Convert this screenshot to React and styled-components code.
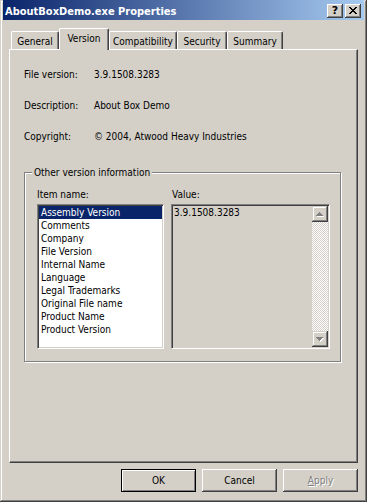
import React from 'react';
import styled, { createGlobalStyle } from 'styled-components';

const FONT = `"DejaVu Sans Condensed", "DejaVu Sans", sans-serif`;

const Global = createGlobalStyle`
  html, body { margin: 0; padding: 0; background: #D4D0C8; }
  body { font-family: ${FONT}; font-size: 10px; color: #000; }
  * { box-sizing: border-box; }
`;

const Window = styled.div`
  width: 367px;
  height: 502px;
  display: flex;
  flex-direction: column;
  padding: 0 3px 3px 3px;
  background: #D4D0C8;
  box-shadow: inset -1px -1px #404040, inset 1px 1px #D4D0C8, inset -2px -2px #808080, inset 2px 2px #ffffff;
`;

const TitleBar = styled.div`
  flex: none;
  height: 20px;
  display: flex;
  align-items: center;
  padding: 2px 3px 0 2px;
  background: linear-gradient(to right, #0A246A, #A6CAF0);
  color: #fff;
  font-weight: bold;
  font-size: 11px;
`;

const Title = styled.div`
  flex: 1;
  white-space: nowrap;
  line-height: 13px;
`;

const CaptionButtons = styled.div`
  display: flex;
  gap: 2px;
`;

const CaptionButton = styled.div`
  width: 16px;
  height: 14px;
  background: #D4D0C8;
  box-shadow: inset -1px -1px #404040, inset 1px 1px #ffffff, inset -2px -2px #808080;
  display: flex;
  align-items: center;
  justify-content: center;
  color: #000;
  font-family: "DejaVu Sans", sans-serif;
  font-weight: bold;
  font-size: 11px;
  line-height: 11px;
  padding-bottom: 1px;
`;

const Body = styled.div`
  flex: 1;
  display: flex;
  flex-direction: column;
  padding: 8px 6px 7px 6px;
`;

const TabStrip = styled.div`
  display: flex;
  align-items: flex-end;
  height: 21px;
  padding-left: 2px;
`;

const Tab = styled.div`
  width: ${p => p.$w}px;
  height: ${p => (p.$active ? 22 : 18)}px;
  margin-bottom: ${p => (p.$active ? -1 : 0)}px;
  position: relative;
  z-index: ${p => (p.$active ? 1 : 0)};
  background: #D4D0C8;
  border-top: 1px solid #fff;
  border-left: 1px solid #fff;
  border-right: 1px solid #404040;
  border-radius: 2px 2px 0 0;
  box-shadow: inset -1px 0 #808080;
  display: flex;
  justify-content: center;
  padding-top: 3px;
  line-height: 13px;
  white-space: nowrap;
`;

const Panel = styled.div`
  flex: 1;
  display: flex;
  flex-direction: column;
  border-top: 1px solid #fff;
  border-left: 1px solid #fff;
  border-right: 1px solid #404040;
  border-bottom: 1px solid #404040;
  box-shadow: inset -1px -1px #808080;
  padding: 18px 16px 0 14px;
`;

const InfoGrid = styled.div`
  display: grid;
  grid-template-columns: 70px 1fr;
  row-gap: 18px;
  line-height: 13px;
  white-space: nowrap;
`;

const GroupBox = styled.fieldset`
  margin: 23px 0 0 0;
  padding: 9px 10px 12px 12px;
  border: 1px solid #808080;
  box-shadow: inset 1px 1px #fff, 1px 1px #fff;
  min-width: 0;
`;

const Legend = styled.legend`
  padding: 0 2px;
  margin-left: -5px;
  line-height: 13px;
  background: #D4D0C8;
`;

const Columns = styled.div`
  display: grid;
  grid-template-columns: 127px 159px;
  grid-template-rows: 13px 145px;
  column-gap: 7px;
  row-gap: 3px;
  line-height: 13px;
`;

const FieldLabel = styled.div`
  padding-left: ${p => p.$indent || 0}px;
  white-space: nowrap;
`;

const Sunken = styled.div`
  border: 1px solid;
  border-color: #808080 #fff #fff #808080;
  box-shadow: inset 1px 1px #404040, inset -1px -1px #D4D0C8;
  padding: 1px;
`;

const ListBox = styled(Sunken)`
  background: #fff;
  overflow: hidden;
`;

const ListItem = styled.div`
  height: 13px;
  line-height: 13px;
  padding-left: 2px;
  white-space: nowrap;
  background: ${p => (p.$selected ? '#0A246A' : 'transparent')};
  color: ${p => (p.$selected ? '#fff' : '#000')};
`;

const ValueBox = styled(Sunken)`
  background: #D4D0C8;
  display: flex;
`;

const ValueText = styled.div`
  flex: 1;
  padding: 0 0 0 1px;
  white-space: nowrap;
`;

const ScrollBar = styled.div`
  width: 16px;
  display: flex;
  flex-direction: column;
`;

const ScrollButton = styled.div`
  height: 16px;
  flex: none;
  background: #D4D0C8;
  box-shadow: inset -1px -1px #404040, inset 1px 1px #D4D0C8, inset -2px -2px #808080, inset 2px 2px #ffffff;
  display: flex;
  align-items: center;
  justify-content: center;
`;

const ScrollTrack = styled.div`
  flex: 1;
  background-color: #D4D0C8;
  background-image: conic-gradient(#fff 25%, transparent 0 50%, #fff 0 75%, transparent 0);
  background-size: 2px 2px;
`;

const ButtonRow = styled.div`
  display: flex;
  justify-content: flex-end;
  gap: 6px;
  margin-top: 6px;
`;

const Button = styled.button`
  width: 75px;
  height: 23px;
  padding: 0;
  margin: 0;
  font-family: ${FONT};
  font-size: 10px;
  background: #D4D0C8;
  color: ${p => (p.$disabled ? '#808080' : '#000')};
  text-shadow: ${p => (p.$disabled ? '1px 1px #fff' : 'none')};
  border: ${p => (p.$default ? '1px solid #000' : 'none')};
  box-shadow: ${p =>
    p.$default
      ? 'inset 1px 1px #fff, inset -1px -1px #808080'
      : 'inset -1px -1px #404040, inset 1px 1px #fff, inset -2px -2px #808080'};
  outline: none;
  appearance: none;
`;

const Arrow = ({ down }) => {
  const rows = [1, 3, 5, 7];
  const rects = (dx, dy, fill) =>
    rows.map((w, i) => {
      const y = down ? 3 - i : i;
      return <rect key={fill + i} x={(7 - w) / 2 + dx} y={y + dy} width={w} height={1} fill={fill} />;
    });
  return (
    <svg width="8" height="5" viewBox="0 0 8 5" shapeRendering="crispEdges">
      {rects(1, 1, '#fff')}
      {rects(0, 0, '#808080')}
    </svg>
  );
};

const CloseGlyph = () => {
  const rows = [
    [0, 1, 6, 7],
    [1, 2, 5, 6],
    [2, 3, 4, 5],
    [3, 4],
    [2, 3, 4, 5],
    [1, 2, 5, 6],
    [0, 1, 6, 7],
  ];
  return (
    <svg width="8" height="7" viewBox="0 0 8 7" shapeRendering="crispEdges">
      {rows.flatMap((xs, y) => xs.map(x => <rect key={`${x}-${y}`} x={x} y={y} width="1" height="1" fill="#000" />))}
    </svg>
  );
};

const tabs = [
  { label: 'General', w: 48 },
  { label: 'Version', w: 50, active: true },
  { label: 'Compatibility', w: 68 },
  { label: 'Security', w: 50 },
  { label: 'Summary', w: 56 },
];

const info = [
  ['File version:', '3.9.1508.3283'],
  ['Description:', 'About Box Demo'],
  ['Copyright:', '© 2004, Atwood Heavy Industries'],
];

const items = [
  'Assembly Version',
  'Comments',
  'Company',
  'File Version',
  'Internal Name',
  'Language',
  'Legal Trademarks',
  'Original File name',
  'Product Name',
  'Product Version',
];

export default function App() {
  return (
    <>
      <Global />
      <Window>
        <TitleBar>
          <Title>AboutBoxDemo.exe Properties</Title>
          <CaptionButtons>
            <CaptionButton>?</CaptionButton>
            <CaptionButton>
              <CloseGlyph />
            </CaptionButton>
          </CaptionButtons>
        </TitleBar>
        <Body>
          <TabStrip>
            {tabs.map(t => (
              <Tab key={t.label} $w={t.w} $active={t.active}>
                {t.label}
              </Tab>
            ))}
          </TabStrip>
          <Panel>
            <InfoGrid>
              {info.map(([k, v]) => (
                <React.Fragment key={k}>
                  <div>{k}</div>
                  <div>{v}</div>
                </React.Fragment>
              ))}
            </InfoGrid>
            <GroupBox>
              <Legend>Other version information</Legend>
              <Columns>
                <FieldLabel>Item name:</FieldLabel>
                <FieldLabel $indent={1}>Value:</FieldLabel>
                <ListBox>
                  {items.map((it, i) => (
                    <ListItem key={it} $selected={i === 0}>
                      {it}
                    </ListItem>
                  ))}
                </ListBox>
                <ValueBox>
                  <ValueText>3.9.1508.3283</ValueText>
                  <ScrollBar>
                    <ScrollButton>
                      <Arrow />
                    </ScrollButton>
                    <ScrollTrack />
                    <ScrollButton>
                      <Arrow down />
                    </ScrollButton>
                  </ScrollBar>
                </ValueBox>
              </Columns>
            </GroupBox>
          </Panel>
          <ButtonRow>
            <Button $default>OK</Button>
            <Button>Cancel</Button>
            <Button $disabled>
              <u>A</u>pply
            </Button>
          </ButtonRow>
        </Body>
      </Window>
    </>
  );
}
